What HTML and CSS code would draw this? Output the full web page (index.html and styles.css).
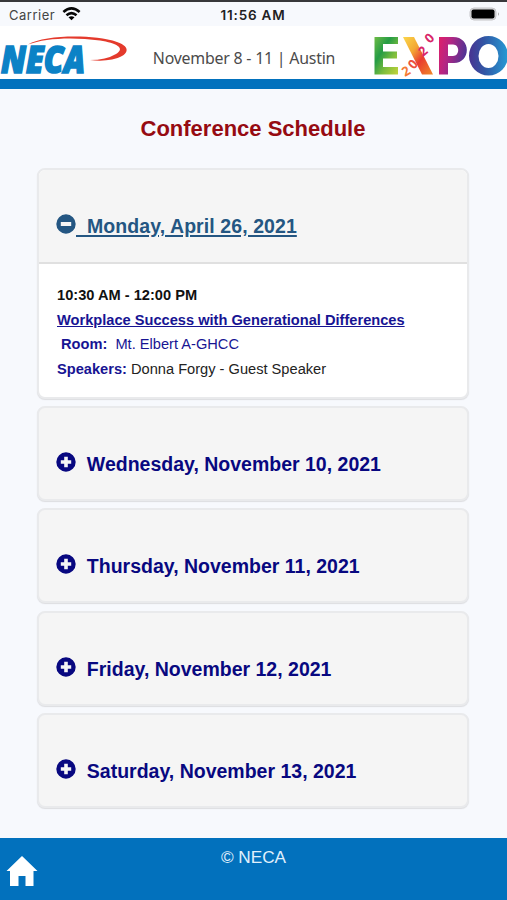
FILE: index.html
```
<!DOCTYPE html>
<html lang="en">
<head>
<meta charset="utf-8">
<title>Conference Schedule</title>
<link rel="stylesheet" href="styles.css">
</head>
<body>
<svg class="defs" aria-hidden="true">
  <symbol id="plus" viewBox="0 0 20 20"><path fill-rule="evenodd" d="M10 .3a9.7 9.7 0 1 0 0 19.4A9.7 9.7 0 0 0 10 .3zM8.2 4.8h3.6v3.4h3.4v3.6h-3.4v3.4H8.2v-3.4H4.8V8.2h3.4z"/></symbol>
  <symbol id="minus" viewBox="0 0 20 20"><path fill-rule="evenodd" d="M10 .3a9.7 9.7 0 1 0 0 19.4A9.7 9.7 0 0 0 10 .3zM4.8 8.1h10.4v3.8H4.8z"/></symbol>
</svg>
<div class="status">
  <div class="carrier">Carrier
    <svg class="wifi" viewBox="0 0 20 15"><g fill="none" stroke="#080808" stroke-width="2.8"><path d="M1.3 5.3Q10-2.2 18.7 5.3"/><path d="M4.6 8.9Q10 4.3 15.4 8.9"/></g><path d="M6.8 11Q10 8.6 13.2 11L10 14.2z"/></svg>
  </div>
  <div class="time">11:56 AM</div>
  <svg class="battery" viewBox="0 0 32 16"><rect x="1" y="1" width="26" height="12" rx="4" fill="#d9d9db" stroke="#c5c5c8"/><rect x="2.500" y="2.500" width="23" height="9" rx="2"/><path d="M29 5.2q2 1.800 0 3.600z" fill="#aaa"/></svg>
</div>
<header class="brand">
  <svg class="neca" viewBox="0 0 130 43">
    <text x="1" y="37" textLength="84" lengthAdjust="spacingAndGlyphs" class="neca-text">NECA</text>
    <path fill="#e43a2c" d="M28 8.500C45-1 92-2 117 6C132 11 129 20 112 23.500Q102 25.500 90 24Q106 24 116 18C126 12 116 7 100 4.500C73 .8 45 2 28 8.500z"/>
  </svg>
  <div class="dates">November 8 - 11 | Austin</div>
  <svg class="expo" viewBox="0 0 134 43">
    <defs>
      <linearGradient id="e" x2="1" y2="1"><stop offset="0" stop-color="#6dbb45"/><stop offset=".35" stop-color="#259c45"/><stop offset=".65" stop-color="#7cbd3d"/><stop offset="1" stop-color="#c4d43a"/></linearGradient>
      <linearGradient id="x" x2="1" y2="1"><stop offset="0" stop-color="#fbd74b"/><stop offset=".35" stop-color="#f3a733"/><stop offset=".6" stop-color="#e93c30"/><stop offset="1" stop-color="#f08a28"/></linearGradient>
      <linearGradient id="p" x2="1" y2=".3"><stop offset="0" stop-color="#e01f69"/><stop offset=".4" stop-color="#b52683"/><stop offset="1" stop-color="#503394"/></linearGradient>
      <linearGradient id="o" x2="1"><stop offset="0" stop-color="#493391"/><stop offset=".4" stop-color="#3157a5"/><stop offset="1" stop-color="#269bd5"/></linearGradient>
    </defs>
    <path fill="url(#e)" d="M1.500 1H25V8H10V15.500H24V22.500H10V31H25V38.500H1.500z"/>
    <path fill="url(#x)" d="M30 1H41L60 38.500H49z"/>
    <path fill="url(#p)" fill-rule="evenodd" d="M66 1H80C99 1 98 28 80 27H75V38.500H66zM75 8.500V20H80C87 20 87 8.500 80 8.500z"/>
    <path fill="url(#o)" fill-rule="evenodd" d="M115.500 0A19.500 19.700 0 1 0 115.500 39.400A19.500 19.700 0 1 0 115.500 0zM115.500 8A10 12 0 1 1 115.500 32A10 12 0 1 1 115.500 8z"/>
    <g class="year"><text x="32" y="41" fill="#f47a34" transform="rotate(-30 32 41)">2</text><text x="41" y="34" fill="#ec5140" transform="rotate(-50 41 34)">0</text><text x="50" y="21" fill="#d92769" transform="rotate(-40 50 21)">2</text><text x="57" y="8" fill="#d92769" transform="rotate(-45 57 8)">0</text></g>
  </svg>
</header>
<main>
  <h1>Conference Schedule</h1>
  <section class="card open">
    <a class="day"><svg class="icon"><use href="#minus"/></svg><span>&nbsp; Monday, April 26, 2021</span></a>
    <div class="session">
      <div class="hours">10:30 AM - 12:00 PM</div>
      <div><a class="topic">Workplace Success with Generational Differences</a></div>
      <div class="room"><b>Room:</b>&nbsp; Mt. Elbert A-GHCC</div>
      <div><b>Speakers:</b> Donna Forgy - Guest Speaker</div>
    </div>
  </section>
  <section class="card"><a class="day"><svg class="icon"><use href="#plus"/></svg><span>&nbsp; Wednesday, November 10, 2021</span></a></section>
  <section class="card"><a class="day"><svg class="icon"><use href="#plus"/></svg><span>&nbsp; Thursday, November 11, 2021</span></a></section>
  <section class="card"><a class="day"><svg class="icon"><use href="#plus"/></svg><span>&nbsp; Friday, November 12, 2021</span></a></section>
  <section class="card"><a class="day"><svg class="icon"><use href="#plus"/></svg><span>&nbsp; Saturday, November 13, 2021</span></a></section>
</main>
<footer>
  <svg class="home" viewBox="0 0 32 32"><path fill="#fff" d="M16 1L31.500 16H27.500V31H19.500V21H12.500V31H4V16H.5z"/></svg>
  <div class="copy">© NECA</div>
</footer>
</body>
</html>
```
FILE: styles.css
```
* { box-sizing: border-box; }
body {
  margin: 0;
  height: 900px;
  display: flex;
  flex-direction: column;
  background: #f7f9fd;
  font-family: "Liberation Sans", Arial, sans-serif;
  color: #222;
  overflow: hidden;
  white-space: nowrap;
}
.defs { display: none; }
svg { display: block; flex: none; }
.status {
  height: 26px;
  flex: none;
  border-top: 2px solid #38383b;
  display: grid;
  grid-template-columns: 1fr auto 1fr;
  align-items: center;
  padding: 1px 6px 0 9px;
  font-family: Inter, sans-serif;
}
.carrier { display: flex; align-items: center; gap: 7px; font-size: 13px; letter-spacing: .5px; color: #444; }
.wifi { width: 19px; height: 14px; margin-top: -2px; }
.time { font-size: 13.500px; font-weight: 600; letter-spacing: .8px; margin-left: -4px; }
.battery { width: 32px; height: 16px; justify-self: end; }
.brand {
  height: 63px;
  flex: none;
  display: flex;
  align-items: flex-start;
  justify-content: space-between;
  padding-top: 10px;
  background: #fff;
  border-bottom: 10px solid #0271bd;
}
.neca { width: 130px; height: 43px; overflow: visible; }
.neca-text { font: italic 800 37px "Open Sans", sans-serif; fill: #0b82c6; stroke: #0b82c6; stroke-width: 1.600px; }
.dates { font: 15.900px/24px "Noto Sans", sans-serif; letter-spacing: -.22px; color: #4b4b4b; padding-top: 10px; margin-left: -15px; }
.expo { width: 134px; height: 43px; overflow: visible; }
.year { font: bold 13px "Open Sans", sans-serif; }
main { flex: 1; padding: 26px 38px 0 37px; }
h1 { margin: 0 0 26px; font-size: 22px; line-height: 27px; text-align: center; color: #960b12; }
.card {
  height: 95px;
  margin-bottom: 7.400px;
  border: 2px solid #e9eaec;
  border-radius: 8px;
  background: #f5f5f5;
  box-shadow: 0 1px 1px #dcdde0;
  overflow: hidden;
}
.open { height: 231px; margin-bottom: 7px; background: #fff; }
.day {
  height: 94px;
  display: flex;
  align-items: center;
  padding: 19px 0 0 17px;
  font-size: 19.500px;
  font-weight: bold;
  color: #080880;
}
.icon { width: 20px; height: 20px; margin-top: -5px; fill: currentColor; }
.open .day { height: 94px; padding-top: 21px; background: #f5f5f5; border-bottom: 2px solid #e0e0e0; color: #245682; }
.open .day span { letter-spacing: .08px; text-decoration: underline; text-decoration-thickness: 1.500px; text-underline-offset: 2px; }
.session { padding: 19px 18px; font-size: 14.640px; line-height: 24.500px; }
.session b, .topic, .room { color: #171493; }
.hours, .topic { font-weight: bold; }
.hours { color: #111; }
.topic { text-decoration: underline; }
.room { padding-left: 4px; }
footer {
  height: 62px;
  flex: none;
  display: grid;
  grid-template-columns: 1fr auto 1fr;
  background: #0271bd;
}
.home { width: 32px; height: 32px; margin: 17px 0 0 6px; }
.copy { padding-top: 9px; font-size: 17.200px; line-height: 20px; color: #e0f0fc; }
```
